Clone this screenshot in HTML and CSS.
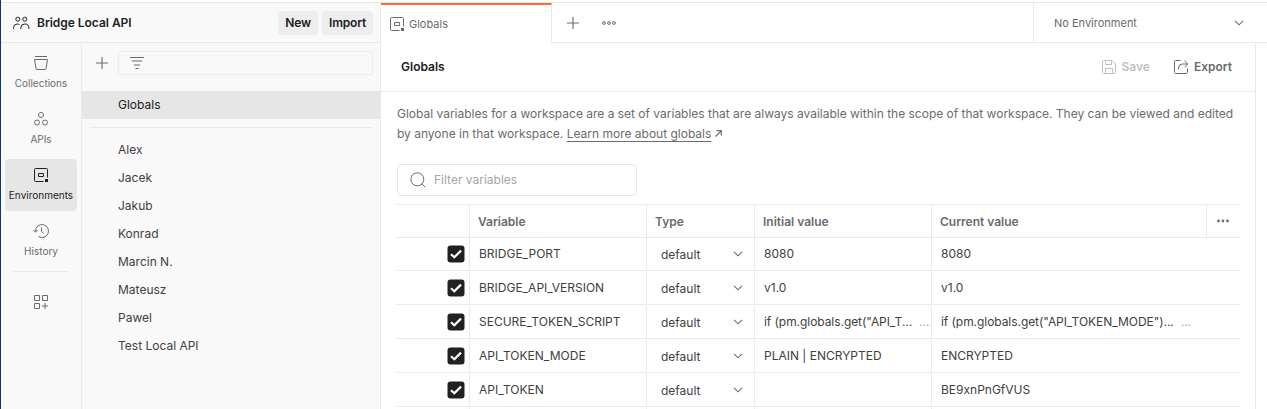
FILE: index.html
```html
<!DOCTYPE html>
<html lang="en">
<head>
<meta charset="utf-8">
<title>Bridge Local API</title>
<link rel="stylesheet" href="styles.css">
</head>
<body>
<svg class="defs" width="0" height="0" aria-hidden="true">
  <symbol id="env" viewBox="0 0 14 14"><path d="M9.500 13.500H1.500Q.5 13.500 .5 12.500V1.500Q.5 .5 1.500 .5H12.500Q13.500 .5 13.500 1.500V9.500M4.500 5.500H9.500V8.500H4.500Z" fill="none" stroke="currentColor"/><path d="M11 11h3v3h-3z" fill="currentColor"/></symbol>
  <symbol id="chev" viewBox="0 0 10 6"><path d="M1 .8 5 4.800 9 .8" fill="none" stroke="currentColor" stroke-width="1.100"/></symbol>
  <symbol id="check" viewBox="0 0 18 18"><rect x=".5" y=".5" width="17" height="17" rx="3" fill="#212121"/><path d="M4 9.300 7.300 12.300 14 5.600" fill="none" stroke="#fff" stroke-width="2.200"/></symbol>
  <symbol id="plus" viewBox="0 0 12 12"><path d="M6 0V12M0 6H12" fill="none" stroke="currentColor" stroke-width="1.100"/></symbol>
</svg>
<div class="app">
  <aside class="sidebar">
    <header class="workspace">
      <svg class="people" width="17" height="14" viewBox="0 0 17 14" fill="none" stroke="#212121"><circle cx="4.800" cy="3.200" r="2"/><circle cx="11.800" cy="3.200" r="2"/><path d="M.6 13V11.500Q.6 8 4.300 8 5.800 8 6.700 8.700M7.800 13V11.800Q7.800 8 11.800 8 15.900 8 15.900 11.800V13"/></svg>
      <span class="workspace-name">Bridge Local API</span>
      <button class="btn new">New</button>
      <button class="btn import">Import</button>
    </header>
    <div class="side-body">
      <nav class="rail">
        <a class="rail-item"><svg width="14" height="14" viewBox="0 0 14 14" fill="none" stroke="currentColor"><path d="M1 .5H13M.5 3.500H13.500L12 12.500Q11.800 13.500 11 13.500H3Q2.200 13.500 2 12.500Z"/></svg><span>Collections</span></a>
        <a class="rail-item"><svg width="14" height="14" viewBox="0 0 14 14" fill="none" stroke="currentColor"><circle cx="7" cy="3" r="2.500"/><circle cx="3" cy="10.500" r="2.500"/><circle cx="11" cy="10.500" r="2.500"/></svg><span>APIs</span></a>
        <a class="rail-item active"><svg width="14" height="14"><use href="#env"/></svg><span>Environments</span></a>
        <a class="rail-item"><svg width="16" height="14" viewBox="0 0 16 14" fill="none" stroke="currentColor"><path d="M2.500 7.500V7A6.500 6.500 0 1 1 5.500 12.500M.5 6 2.500 8.200 4.700 6M8.500 3.500V7.500L10.800 9.500"/></svg><span>History</span></a>
        <hr class="rail-line">
        <svg class="blocks" width="14" height="14" viewBox="0 0 14 14" fill="none" stroke="#6b6b6b"><path d="M.5 .5h5v5h-5zM8.500 .5h5v5h-5zM.5 8.500h5v5h-5zM11 8V14M8 11H14"/></svg>
      </nav>
      <section class="envs">
        <div class="env-tools">
          <svg class="add" width="12" height="12"><use href="#plus"/></svg>
          <div class="env-filter"><svg width="14" height="12" viewBox="0 0 14 12" fill="none" stroke="#6b6b6b"><path d="M0 .5H14M2 4H12M4 8H10M5.500 11.500H8.500" stroke-width="1.100"/></svg></div>
        </div>
        <div class="env selected">Globals</div>
        <hr class="env-line">
        <div class="env">Alex</div>
        <div class="env">Jacek</div>
        <div class="env">Jakub</div>
        <div class="env">Konrad</div>
        <div class="env">Marcin N.</div>
        <div class="env">Mateusz</div>
        <div class="env">Pawel</div>
        <div class="env">Test Local API</div>
      </section>
    </div>
  </aside>
  <main class="main">
    <div class="tabs">
      <div class="tab"><svg width="14" height="14"><use href="#env"/></svg><span>Globals</span></div>
      <div class="tab-actions">
        <svg width="12" height="12"><use href="#plus"/></svg>
        <svg class="more" width="14" height="4" viewBox="0 0 14 4" fill="none" stroke="#6b6b6b"><circle cx="2" cy="2" r="1.400"/><circle cx="7" cy="2" r="1.400"/><circle cx="12" cy="2" r="1.400"/></svg>
      </div>
      <div class="env-select"><span>No Environment</span><svg width="10" height="6"><use href="#chev"/></svg></div>
    </div>
    <div class="page">
      <div class="title-row">
        <h1>Globals</h1>
        <div class="action save"><svg width="14" height="14" viewBox="0 0 14 14" fill="none" stroke="currentColor"><path d="M10 .5 13.500 4V12.500Q13.500 13.500 12.500 13.500H1.500Q.5 13.500 .5 12.500V1.500Q.5 .5 1.500 .5H10M3.500 .5V4.500H9.500V.5M3.500 13.500V8.500H10.500V13.500"/></svg><span>Save</span></div>
        <div class="action export"><svg width="15" height="14" viewBox="0 0 15 14" fill="none" stroke="currentColor"><path d="M6.500 .5H1.500Q.5 .5 .5 1.500V12.500Q.5 13.500 1.500 13.500H12.500Q13.500 13.500 13.500 12.500V8.500M4.500 9.500V8Q4.500 4 8.500 4H13.500M10.500 .8 13.800 4 10.500 7.200"/></svg><span>Export</span></div>
      </div>
      <div class="content">
        <p class="desc">Global variables for a workspace are a set of variables that are always available within the scope of that workspace. They can be viewed and edited<br><span class="line2">by anyone in that workspace. <a class="learn">Learn more about globals</a></span><svg class="arrow" width="7" height="7" viewBox="0 0 7 7" fill="none" stroke="#6b6b6b" stroke-width="1.200"><path d="M.5 6.500 6.200 .8M1.500 .7H6.300V5.500"/></svg></p>
        <div class="search"><svg width="16" height="16" viewBox="0 0 16 16" fill="none" stroke="#6b6b6b"><circle cx="7.300" cy="7.300" r="6.500"/><path d="M12 12 15.200 15.200"/></svg><span>Filter variables</span></div>
        <div class="table">
          <div class="row head"><div class="cell"></div><div class="cell line">Variable</div><div class="cell line type">Type</div><div class="cell line">Initial value</div><div class="cell line">Current value</div><div class="cell line dots"><svg width="12" height="4" viewBox="0 0 12 4" fill="#6b6b6b"><circle cx="1.500" cy="2" r="1.400"/><circle cx="6" cy="2" r="1.400"/><circle cx="10.500" cy="2" r="1.400"/></svg></div></div>
          <div class="row first"><div class="cell box"><svg width="18" height="18"><use href="#check"/></svg></div><div class="cell line">BRIDGE_PORT</div><div class="cell line kind"><span>default</span><svg width="10" height="6"><use href="#chev"/></svg></div><div class="cell line">8080</div><div class="cell line">8080</div><div class="cell"></div></div>
          <div class="row"><div class="cell box"><svg width="18" height="18"><use href="#check"/></svg></div><div class="cell line">BRIDGE_API_VERSION</div><div class="cell line kind"><span>default</span><svg width="10" height="6"><use href="#chev"/></svg></div><div class="cell line">v1.0</div><div class="cell line">v1.0</div><div class="cell"></div></div>
          <div class="row"><div class="cell box"><svg width="18" height="18"><use href="#check"/></svg></div><div class="cell line">SECURE_TOKEN_SCRIPT</div><div class="cell line kind"><span>default</span><svg width="10" height="6"><use href="#chev"/></svg></div><div class="cell line"><span class="script script-short">if (pm.globals.get("API_T...</span><span class="rest">...</span></div><div class="cell line"><span class="script">if (pm.globals.get("API_TOKEN_MODE")...</span><span class="rest">...</span></div><div class="cell"></div></div>
          <div class="row"><div class="cell box"><svg width="18" height="18"><use href="#check"/></svg></div><div class="cell line">API_TOKEN_MODE</div><div class="cell line kind"><span>default</span><svg width="10" height="6"><use href="#chev"/></svg></div><div class="cell line">PLAIN | ENCRYPTED</div><div class="cell line">ENCRYPTED</div><div class="cell"></div></div>
          <div class="row"><div class="cell box"><svg width="18" height="18"><use href="#check"/></svg></div><div class="cell line">API_TOKEN</div><div class="cell line kind"><span>default</span><svg width="10" height="6"><use href="#chev"/></svg></div><div class="cell line"></div><div class="cell line">BE9xnPnGfVUS</div><div class="cell"></div></div>
          <div class="row"><div class="cell"></div><div class="cell line"></div><div class="cell line"></div><div class="cell line"></div><div class="cell line"></div><div class="cell"></div></div>
        </div>
      </div>
    </div>
  </main>
</div>
</body>
</html>
```
FILE: styles.css
```css
* { box-sizing: border-box; }
body { margin: 0; font: 12px/16px Inter, sans-serif; color: #212121; background: #fff; overflow: hidden; }
svg { display: block; flex: none; }
.defs { position: absolute; }
hr { border: 0; height: 1px; background: #e9e9e9; margin: 0; }
.app { display: flex; height: 409px; border-left: 1px solid #0a3870; padding-top: 2px; overflow: hidden; white-space: nowrap; }
.sidebar { width: 380px; flex: none; display: flex; flex-direction: column; background: #f9f9f9; border-right: 1px solid #e9e9e9; border-top: 1px solid #e6e6e6; }
.workspace { height: 40px; flex: none; display: flex; align-items: center; border-bottom: 1px solid #e9e9e9; padding: 0 7px 0 12px; }
.people { margin-right: 7px; }
.workspace-name { flex: 1; font-weight: 600; letter-spacing: -.03px; }
.btn { height: 24px; border: 0; border-radius: 4px; background: #ededed; color: #212121; font: 600 12px/24px Inter, sans-serif; letter-spacing: -.2px; padding: 0; }
.new { width: 40px; margin-right: 4px; }
.import { width: 51px; }
.side-body { flex: 1; display: flex; }
.rail { width: 81px; flex: none; border-right: 1px solid #e9e9e9; padding: 4px 4px 0; display: flex; flex-direction: column; align-items: center; color: #6b6b6b; }
.rail-item { width: 72px; height: 52px; margin-bottom: 4px; border-radius: 4px; padding-top: 9px; display: flex; flex-direction: column; align-items: center; gap: 6px; font-size: 10px; line-height: 14px; }
.rail-item.active { background: #e6e6e6; color: #212121; }
.rail-line { width: 56px; }
.blocks { margin-top: 23px; }
.envs { flex: 1; }
.env-tools { display: flex; align-items: center; padding: 8px 7px 0 14px; height: 32px; color: #6b6b6b; }
.env-filter { width: 255px; height: 24px; border: 1px solid #ededed; border-radius: 2px; margin-left: 10px; padding: 5px 11px; }
.env { height: 28px; line-height: 28px; padding-left: 36px; color: #404040; }
.selected { background: #e6e6e6; margin-top: 16px; color: #212121; }
.env-line { margin: 8px 7px 8px 8px; }
.main { flex: 1; min-width: 0; border-top: 1px solid #e6e6e6; }
.tabs { height: 40px; display: flex; color: #6b6b6b; font-size: 11px; }
.tab { width: 171px; border-top: 2px solid #ff6c37; border-right: 1px solid #e9e9e9; display: flex; align-items: center; gap: 5px; padding: 0 0 0 9px; }
.tab-actions { flex: 1; border-bottom: 1px solid #e9e9e9; display: flex; align-items: center; gap: 23px; padding-left: 15px; }
.env-select { width: 234px; border-left: 1px solid #e9e9e9; border-bottom: 1px solid #e9e9e9; display: flex; align-items: center; justify-content: space-between; padding: 0 23px 0 20px; }
.page { width: 875px; height: 366px; border-right: 1px solid #e9e9e9; }
.title-row { height: 49px; border-bottom: 1px solid #e9e9e9; display: flex; align-items: center; padding: 0 23px 0 20px; }
h1 { flex: 1; margin: 0; font-size: 12px; line-height: 16px; font-weight: 600; }
.action { display: flex; align-items: center; gap: 5px; font-weight: 600; color: #6b6b6b; }
.save { color: #bfbfbf; margin-right: 24px; }
.content { padding: 12px 15px 0 16px; }
.desc { margin: 0; line-height: 20px; color: #6b6b6b; letter-spacing: -.005px; }
.learn { text-decoration: underline; text-underline-offset: 3px; }
.arrow { display: inline-block; margin-left: 4px; vertical-align: 1px; }
.search { width: 240px; height: 32px; margin-top: 20px; border: 1px solid #e6e6e6; border-radius: 4px; display: flex; align-items: center; gap: 8px; padding-left: 12px; color: #a6a6a6; }
.table { margin-top: 8px; border-top: 1px solid #e9e9e9; width: 843px; }
.row { display: grid; grid-template-columns: 72px 177px 108px 177px 275px 34px; height: 34px; border-bottom: 1px solid #e9e9e9; padding-top: 1px; color: #404040; }
.cell { display: flex; align-items: center; padding-left: 9px; min-width: 0; }
.line { border-left: 1px solid #e9e9e9; }
.head, .first { height: 33px; padding-top: 0; }
.head { font-weight: 600; color: #6b6b6b; }
.head .cell { padding: 1px 0 0 8px; }
.head .dots { padding: 0 0 0 10px; }
.box { padding-left: 50px; }
.kind { padding: 1px 11px 0 14px; justify-content: space-between; }
.kind svg { color: #6b6b6b; margin-bottom: 2px; }
.script { letter-spacing: -.06px; }
.rest { color: #a6a6a6; margin-left: 7px; }
```
